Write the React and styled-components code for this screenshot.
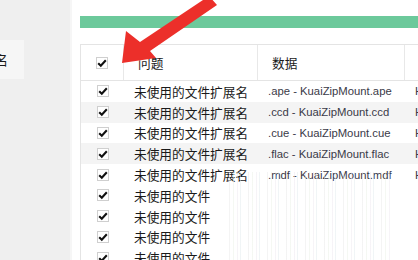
import styled, {createGlobalStyle} from "styled-components";

const Global = createGlobalStyle`
  html, body {
    margin: 0;
    padding: 0;
    background: #fff;
  }
  body {
    font-family: "Noto Sans CJK SC", "Liberation Sans", sans-serif;
    color: #1a1a1a;
  }
`

const Page = styled.div`
  position: relative;
  display: flex;
  width: 418px;
  height: 260px;
  overflow: hidden;
`

const Sidebar = styled.div`
  width: 70px;
  flex-shrink: 0;
  background: #efefef;
  border-right: 2px solid #f6f6f6;
  padding-top: 40px;
`

const NavItem = styled.div`
  width: 24px;
  height: 39px;
  background: #f6f6f6;
  display: flex;
  align-items: center;
  overflow: hidden;
  font-size: 13px;

  span {
    margin-left: -5px;
    white-space: nowrap;
  }
`

const Main = styled.div`
  flex: 1;
  padding: 16px 0 0 8px;
  overflow: hidden;
`

const GreenBar = styled.div`
  height: 12px;
  background: #6cc99b;
`

const Table = styled.div`
  margin-top: 16px;
  width: 420px;
  border-left: 1px solid #e4e4e4;
  border-top: 1px solid #e4e4e4;
`

const Row = styled.div`
  display: grid;
  grid-template-columns: 43px 134px 147px 100px;
  height: ${p => p.$head ? 35 : 20.8}px;
  align-items: center;
  background: ${p => p.$shade ? "#f4f4f4" : "#fff"};
  border-bottom: ${p => p.$head ? "1px solid #e4e4e4" : "none"};
`

const Cell = styled.div`
  height: 100%;
  display: flex;
  align-items: center;
  padding-left: ${p => p.$head ? 14 : 10}px;
  border-right: ${p => p.$head ? "1px solid #e8e8e8" : "none"};
  white-space: nowrap;
  overflow: hidden;
  font-size: ${p => p.$latin ? 11.3 : 12.7}px;
  font-family: ${p => p.$latin ? '"Liberation Sans", Arial, sans-serif' : 'inherit'};
  color: ${p => p.$latin ? "#3a3a48" : "#1a1a1a"};
`

const CheckCell = styled(Cell)`
  justify-content: center;
  padding-left: 0;
`

const Box = styled.span`
  width: 12px;
  height: 12px;
  box-sizing: border-box;
  border: 1px solid #cfcfcf;
  background: #fff;
  display: flex;
  align-items: center;
  justify-content: center;
`

const Arrow = styled.svg`
  position: absolute;
  left: 0;
  top: 0;
  pointer-events: none;
`

const Stripes = styled.div`
  position: absolute;
  left: 226px;
  top: 172px;
  width: 166px;
  height: 88px;
  opacity: 0.45;
  background: repeating-linear-gradient(90deg,
    transparent 0px, transparent 3px,
    #e6e6e6 3px, #e6e6e6 4px,
    transparent 4px, transparent 7px,
    #e8efe4 7px, #e8efe4 8px,
    transparent 8px, transparent 11px,
    #ece6ee 11px, #ece6ee 12px,
    transparent 12px, transparent 14px,
    #dfe9ec 14px, #dfe9ec 15px,
    transparent 15px, transparent 19px);
`

const Check = () => (
    <Box>
        <svg width="10" height="10" viewBox="0 0 10 10">
            <path d="M1.2 5.2 L3.8 7.7 L8.8 2.3" fill="none" stroke="#111" strokeWidth="2.1"/>
        </svg>
    </Box>
)

const rows = [
    ["未使用的文件扩展名", ".ape - KuaiZipMount.ape", "HKEY_CLASSES_ROOT"],
    ["未使用的文件扩展名", ".ccd - KuaiZipMount.ccd", "HKEY_CLASSES_ROOT"],
    ["未使用的文件扩展名", ".cue - KuaiZipMount.cue", "HKEY_CLASSES_ROOT"],
    ["未使用的文件扩展名", ".flac - KuaiZipMount.flac", "HKEY_CLASSES_ROOT"],
    ["未使用的文件扩展名", ".mdf - KuaiZipMount.mdf", "HKEY_CLASSES_ROOT"],
    ["未使用的文件", "", ""],
    ["未使用的文件", "", ""],
    ["未使用的文件", "", ""],
    ["未使用的文件", "", ""],
]

const App = () => {
    return (
        <Page>
            <Global/>
            <Sidebar>
                <NavItem><span>名</span></NavItem>
            </Sidebar>
            <Main>
                <GreenBar/>
                <Table>
                    <Row $head>
                        <CheckCell $head><Check/></CheckCell>
                        <Cell $head>问题</Cell>
                        <Cell $head>数据</Cell>
                        <Cell $head/>
                    </Row>
                    {rows.map((r, i) => (
                        <Row key={i} $shade={i === 1 || i === 3}>
                            <CheckCell><Check/></CheckCell>
                            <Cell>{r[0]}</Cell>
                            <Cell $latin>{r[1]}</Cell>
                            <Cell $latin>{r[2]}</Cell>
                        </Row>
                    ))}
                </Table>
            </Main>
            <Stripes/>
            <Arrow width="418" height="260" viewBox="0 0 418 260">
                <polygon points="209,-4 217,5 150,51 156,58 122,63 126,31 140,42" fill="#ec2f2a"/>
            </Arrow>
        </Page>
    )
}

export default App;
